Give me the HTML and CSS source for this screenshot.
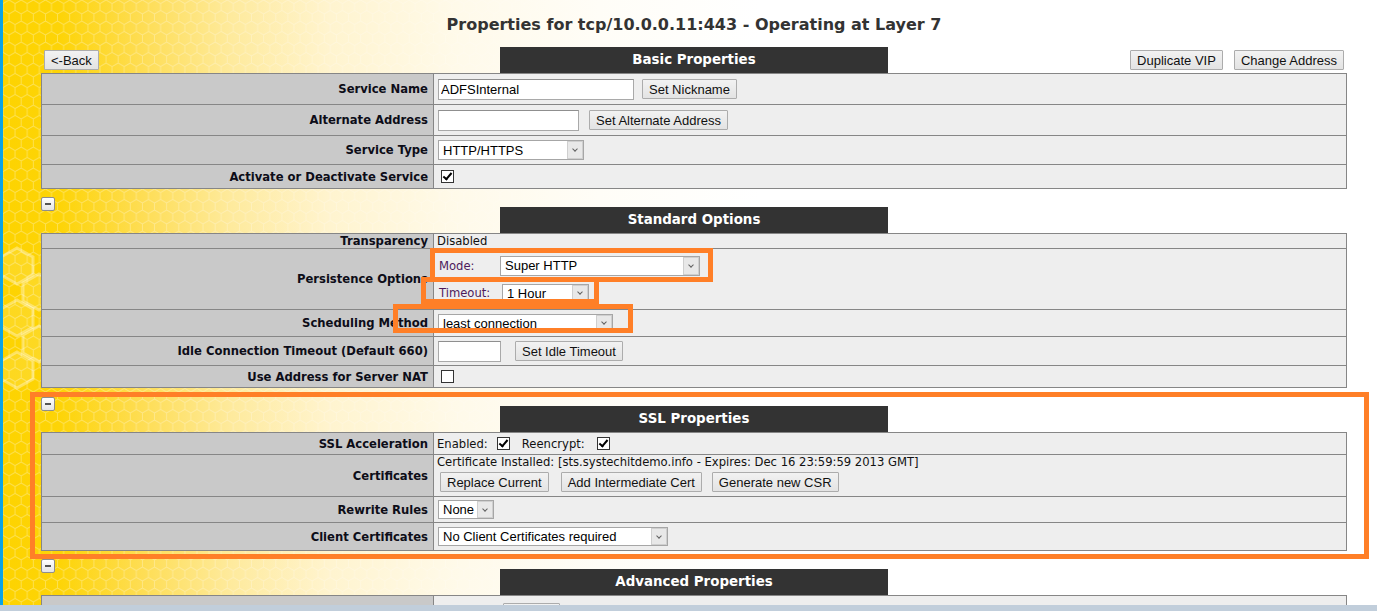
FILE: index.html
```html
<!DOCTYPE html>
<html lang="en">
<head>
  <meta charset="UTF-8">
  <title>Virtual Service Properties</title>
  <link rel="stylesheet" href="styles.css">
</head>
<body>
  <!-- honeycomb backdrop -->
  <svg class="honey" width="820" height="611" aria-hidden="true">
    <defs>
      <pattern id="hex" width="12.124" height="21" patternUnits="userSpaceOnUse">
        <path d="M6.062 0 L12.124 3.5 V10.5 L6.062 14 L0 10.5 V3.5 Z M6.062 14 V21" fill="none" stroke="#fff" stroke-width="1"/>
      </pattern>
      <linearGradient id="fade" x1="0" x2="1" y1="0" y2="0">
        <stop offset="0" stop-color="#fff" stop-opacity="0.32"/>
        <stop offset="0.45" stop-color="#fff" stop-opacity="0.22"/>
        <stop offset="1" stop-color="#fff" stop-opacity="0"/>
      </linearGradient>
      <mask id="fadeMask">
        <rect width="820" height="611" fill="url(#fade)"/>
      </mask>
    </defs>
    <rect width="820" height="611" fill="url(#hex)" mask="url(#fadeMask)"/>
    <g class="big-hex">
      <polygon points="14,248 30,257 30,275 14,284 -2,275 -2,257"/>
      <polygon points="36,274 52,283 52,301 36,310 20,301 20,283"/>
      <polygon points="14,300 30,309 30,327 14,336 -2,327 -2,309"/>
      <polygon points="36,326 52,335 52,353 36,362 20,353 20,335"/>
      <polygon points="14,352 30,361 30,379 14,388 -2,379 -2,361"/>
      <polygon points="58,248 74,257 74,275 58,284 42,275 42,257"/>
    </g>
  </svg>

  <div class="page">
    <h1 class="title">Properties for tcp/10.0.0.11:443 - Operating at Layer 7</h1>

    <!-- Basic Properties -->
    <div class="sect-head first">
      <div class="head-left"><button class="btn">&lt;-Back</button></div>
      <div class="bar">Basic Properties</div>
      <div class="head-right">
        <button class="btn">Duplicate VIP</button>
        <button class="btn">Change Address</button>
      </div>
    </div>
    <table class="props">
      <tr class="row-31">
        <th>Service Name</th>
        <td><div class="ctl gap-8"><input class="txt in-name" value="ADFSInternal"><button class="btn">Set Nickname</button></div></td>
      </tr>
      <tr class="row-31">
        <th>Alternate Address</th>
        <td><div class="ctl gap-10"><input class="txt in-alt" value=""><button class="btn">Set Alternate Address</button></div></td>
      </tr>
      <tr class="row-29">
        <th>Service Type</th>
        <td><span class="sel sel-type"><select><option>HTTP/HTTPS</option></select></span></td>
      </tr>
      <tr class="row-24">
        <th>Activate or Deactivate Service</th>
        <td><input type="checkbox" class="chk" checked></td>
      </tr>
    </table>

    <!-- Standard Options -->
    <button class="toggle toggle-std" aria-label="Collapse"></button>
    <div class="sect-head">
      <div></div>
      <div class="bar">Standard Options</div>
      <div></div>
    </div>
    <table class="props">
      <tr class="row-16">
        <th>Transparency</th>
        <td>Disabled</td>
      </tr>
      <tr class="row-61">
        <th>Persistence Options</th>
        <td>
          <div class="pers">
            <div class="pers-line">
              <span class="sub sub-mode">Mode:</span>
              <span class="sel sel-mode"><select><option>Super HTTP</option></select></span>
            </div>
            <div class="pers-line">
              <span class="sub sub-timeout">Timeout:</span>
              <span class="sel sel-timeout"><select class="short"><option>1 Hour</option></select></span>
            </div>
          </div>
        </td>
      </tr>
      <tr class="row-27">
        <th>Scheduling Method</th>
        <td><span class="sel sel-sched"><select class="short"><option>least connection</option></select></span></td>
      </tr>
      <tr class="row-29">
        <th>Idle Connection Timeout (Default 660)</th>
        <td><div class="ctl gap-14"><input class="txt in-idle" value=""><button class="btn">Set Idle Timeout</button></div></td>
      </tr>
      <tr class="row-22">
        <th>Use Address for Server NAT</th>
        <td><input type="checkbox" class="chk"></td>
      </tr>
    </table>

    <!-- SSL Properties -->
    <button class="toggle toggle-ssl" aria-label="Collapse"></button>
    <div class="sect-head">
      <div></div>
      <div class="bar">SSL Properties</div>
      <div></div>
    </div>
    <table class="props">
      <tr class="row-23">
        <th>SSL Acceleration</th>
        <td>
          <div class="ctl">
            <span>Enabled:</span><input type="checkbox" class="chk chk-enabled" checked>
            <span class="reenc">Reencrypt:</span><input type="checkbox" class="chk chk-reenc" checked>
          </div>
        </td>
      </tr>
      <tr class="row-42">
        <th>Certificates</th>
        <td>
          <div class="cert-text">Certificate Installed: [sts.systechitdemo.info - Expires: Dec 16 23:59:59 2013 GMT]</div>
          <div class="ctl cert-btns">
            <button class="btn">Replace Current</button>
            <button class="btn">Add Intermediate Cert</button>
            <button class="btn">Generate new CSR</button>
          </div>
        </td>
      </tr>
      <tr class="row-26">
        <th>Rewrite Rules</th>
        <td><span class="sel sel-rewrite"><select class="short"><option>None</option></select></span></td>
      </tr>
      <tr class="row-28">
        <th>Client Certificates</th>
        <td><span class="sel sel-client"><select class="short"><option>No Client Certificates required</option></select></span></td>
      </tr>
    </table>

    <!-- Advanced Properties (cut off by the window edge) -->
    <button class="toggle toggle-adv" aria-label="Collapse"></button>
    <div class="sect-head">
      <div></div>
      <div class="bar">Advanced Properties</div>
      <div></div>
    </div>
    <table class="props">
      <tr class="row-31">
        <th></th>
        <td><button class="btn btn-adv" aria-label="Edit"></button></td>
      </tr>
    </table>

    <!-- annotation boxes -->
    <div class="mark mark-mode"></div>
    <div class="mark mark-timeout"></div>
    <div class="mark mark-sched"></div>
    <div class="mark mark-ssl"></div>
  </div>

  <div class="frame-bottom"></div>
</body>
</html>
```

FILE: styles.css
```css
html, body {
  margin: 0;
  padding: 0;
  height: 611px;
  overflow: hidden;
}
body {
  position: relative;
  border-left: 3px solid #0ba3e6;
  font-family: "DejaVu Sans", Verdana, sans-serif;
  font-size: 11.6px;
  color: #111;
  background: linear-gradient(90deg, #fdd300 0, #fdd407 60px, #fedd52 140px, #feea9c 230px, #fff4cf 330px, #fffaea 460px, #fffdf7 600px, #fff 760px);
}

.honey {
  position: absolute;
  left: 0;
  top: 0;
  pointer-events: none;
}
.big-hex polygon {
  fill: #fff;
  fill-opacity: 0.12;
  stroke: #fff;
  stroke-opacity: 0.35;
  stroke-width: 3;
}

.page {
  position: relative;
  width: 1306px;
  margin-left: 38px;
}

.title {
  margin: 0;
  padding-top: 14px;
  line-height: 22px;
  font-size: 16px;
  font-weight: bold;
  color: #333;
  text-align: center;
}

/* section header: left tools, dark bar, right tools */
.sect-head {
  display: grid;
  grid-template-columns: 1fr 388px 1fr;
  align-items: center;
}
.sect-head.first {
  margin-top: 11px;
}
.head-left {
  padding-left: 3px;
}
.head-right {
  display: flex;
  justify-content: flex-end;
  gap: 11px;
  padding-right: 3px;
}
.bar {
  height: 26px;
  line-height: 26px;
  background: #333;
  color: #fff;
  font-size: 13.4px;
  font-weight: bold;
  text-align: center;
}

.toggle {
  display: block;
  width: 14px;
  height: 14px;
  margin: 9px 0 -4px;
  padding: 0;
  position: relative;
  border: 1px solid #8e8e8e;
  border-radius: 2px;
  background: linear-gradient(#fff, #e4e4e4);
}
.toggle::after {
  content: '';
  position: absolute;
  left: 3px;
  top: 5px;
  width: 6px;
  height: 1.5px;
  background: #555;
}
.toggle-std {
  margin-top: 8px;
}
.toggle-ssl {
  margin-bottom: -5px;
}
.toggle-adv {
  margin-top: 8px;
}

/* property tables */
.props {
  width: 100%;
  border-collapse: collapse;
  border: 1px solid #868686;
}
.props th,
.props td {
  border: 1px solid #868686;
  padding: 0 0 0 3px;
  vertical-align: middle;
}
.props th {
  width: 386px;
  padding: 0 5px 0 0;
  background: #c9c9c9;
  text-align: right;
  font-weight: bold;
  color: #0d0d18;
  white-space: nowrap;
}
.props td {
  background: #eee;
}
.row-16 { height: 15px; }
.row-22 { height: 22px; }
.row-23 { height: 22px; }
.row-24 { height: 24px; }
.row-26 { height: 26px; }
.row-27 { height: 27px; }
.row-28 { height: 28px; }
.row-29 { height: 29px; }
.row-31 { height: 31px; }
.row-42 { height: 42px; }
.row-61 { height: 61px; }

/* controls */
.ctl {
  display: flex;
  align-items: center;
}
.gap-8 { gap: 8px; }
.gap-10 { gap: 10px; }
.gap-14 { gap: 14px; }

.btn {
  height: 20px;
  margin: 0;
  padding: 0 6px;
  border: 1px solid #acacac;
  border-radius: 1px;
  background: linear-gradient(#f2f2f2, #e3e3e3);
  font-family: "Liberation Sans", Arial, sans-serif;
  font-size: 13px;
  color: #111;
}

.txt {
  box-sizing: border-box;
  height: 21px;
  margin: 0 0 0 1px;
  padding: 0 2px;
  border: 1px solid #a9a9a9;
  border-top-color: #8f8f8f;
  background: #fff;
  font-family: "Liberation Sans", Arial, sans-serif;
  font-size: 13px;
  color: #000;
}
.in-name { width: 196px; }
.in-alt { width: 141px; }
.in-idle { width: 63px; }

.sel {
  position: relative;
  display: inline-block;
  vertical-align: middle;
  margin-left: 1px;
}
.sel select {
  -webkit-appearance: none;
  appearance: none;
  display: block;
  box-sizing: border-box;
  width: 100%;
  height: 20px;
  margin: 0;
  padding: 0 20px 0 4px;
  border: 1px solid #a6a6a6;
  border-radius: 0;
  background: #fff;
  font-family: "Liberation Sans", Arial, sans-serif;
  font-size: 13px;
  color: #000;
}
.sel select.short {
  height: 19px;
}
.sel::after {
  content: '';
  position: absolute;
  right: 1px;
  top: 1px;
  bottom: 1px;
  width: 16px;
  box-sizing: border-box;
  border: 1px solid #cfcfcf;
  background: #e8e8e8;
}
.sel::before {
  content: '';
  position: absolute;
  z-index: 1;
  right: 7px;
  top: 50%;
  width: 3px;
  height: 3px;
  margin-top: -3px;
  border: solid #606060;
  border-width: 0 1.5px 1.5px 0;
  transform: rotate(45deg);
}
.sel-type { width: 146px; }
.sel-mode { width: 200px; }
.sel-timeout { width: 87px; }
.sel-sched { width: 175px; }
.sel-rewrite { width: 56px; }
.sel-rewrite select { padding: 0 17px 0 4px; }
.sel-client { width: 230px; }

.chk {
  -webkit-appearance: none;
  appearance: none;
  position: relative;
  display: block;
  width: 13px;
  height: 13px;
  margin: 0 0 0 4px;
  border: 1px solid #333;
  background: #fff;
}
.chk:checked::after {
  content: '';
  position: absolute;
  left: 3px;
  top: 0;
  width: 3px;
  height: 7px;
  border: solid #000;
  border-width: 0 2px 2px 0;
  transform: rotate(40deg);
}
.chk-enabled { margin-left: 9px; }
.chk-reenc { margin-left: 12px; }
.reenc { margin-left: 12px; }

.pers {
  display: flex;
  flex-direction: column;
  gap: 8px;
  padding: 1px 0;
}
.pers-line {
  display: flex;
  align-items: center;
}
.sub {
  padding-left: 2px;
  color: #4d1a5c;
}
.sub-mode { width: 60px; }
.sub-timeout { width: 62px; }

.cert-text {
  line-height: 13px;
}
.cert-btns {
  gap: 12px;
  margin: 3px 0 3px 3px;
}
.cert-btns .btn:nth-child(3) { margin-left: -2px; }

.btn-adv {
  width: 57px;
  margin-left: 66px;
  margin-top: 6px;
}

/* orange callouts drawn over the form */
.mark {
  position: absolute;
  box-sizing: border-box;
  border: 5px solid #ff7f27;
  pointer-events: none;
}
.mark-mode { left: 389px; top: 248px; width: 283px; height: 34px; }
.mark-timeout { left: 380px; top: 277px; width: 178px; height: 27px; }
.mark-sched { left: 352px; top: 304px; width: 240px; height: 29px; }
.mark-ssl { left: -11px; top: 392px; width: 1339px; height: 167px; }

.frame-bottom {
  position: fixed;
  left: 0;
  right: 0;
  bottom: 0;
  height: 6px;
  background: #c1cedb;
}
```
